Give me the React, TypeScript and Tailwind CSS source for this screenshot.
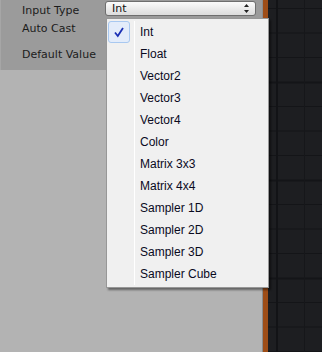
import React from "react";

const items = [
  "Int",
  "Float",
  "Vector2",
  "Vector3",
  "Vector4",
  "Color",
  "Matrix 3x3",
  "Matrix 4x4",
  "Sampler 1D",
  "Sampler 2D",
  "Sampler 3D",
  "Sampler Cube",
];

function GraphGrid() {
  return (
    <svg width="54" height="352" className="block">
      <rect width="54" height="352" fill="#1d1e21" />
      {[0, 1, 2, 3, 4, 5, 6, 7, 8, 9, 10, 11, 12, 13, 14].map((i) => (
        <rect key={"h" + i} x="0" y={8 + i * 24.5} width="54" height={i % 4 === 3 ? 2 : 1} fill="#141518" />
      ))}
      <rect x="8" y="0" width="2" height="352" fill="#121316" />
      <rect x="36" y="0" width="1" height="352" fill="#16171a" />
    </svg>
  );
}

export default function App() {
  return (
    <div className="relative flex h-[352px] w-[322px] overflow-hidden bg-[#b3b3b3] font-['DejaVu_Sans',sans-serif]">
      {/* Inspector */}
      <div className="flex w-[262px] flex-col">
        <div className="flex h-[70px] flex-col border-l border-[#a6a6a6] bg-[#9b9b9b] text-[11px] leading-[13px] text-[#1b1b1b]">
          <div className="flex h-[18px] items-start">
            <span className="ml-[21px] w-[83px] pt-[4px]">Input Type</span>
            <div className="relative mt-px flex h-[15px] w-[151px] items-center rounded-[3px] border border-[#6e6e6e] bg-[linear-gradient(#fbfbfb,#dcdcdc)] pl-[6px] text-[11px] text-[#111]">
              Int
              <svg width="5" height="9" viewBox="0 0 5 9" className="absolute right-[6px] top-[2px]">
                <path d="M2.5 0 L5 3 L0 3 Z M0 6 L5 6 L2.5 9 Z" fill="#222" />
              </svg>
            </div>
          </div>
          <span className="ml-[21px] mt-[4px]">Auto Cast</span>
          <span className="ml-[21px] mt-[13px]">Default Value</span>
        </div>
        <div className="flex-1 bg-[#b3b3b3]" />
      </div>
      <div className="w-px bg-[#8c8c8c]" />
      <div className="w-[5px] bg-[#9e4d17]" />
      <div className="flex-1">
        <GraphGrid />
      </div>

      {/* Dropdown menu */}
      <div className="absolute left-[106px] top-[18px] w-[163px] border border-[#979797] bg-[#f0f0f0] py-[2px] shadow-[2px_2px_2px_rgba(0,0,0,0.45)] font-['Liberation_Sans',sans-serif] text-[12px] text-[#0a0a1e]">
        <div className="absolute bottom-[2px] left-[27px] top-[2px] w-px bg-[#e2e3e3] border-r border-white" />
        {items.map((it, i) => (
          <div key={it} className="flex h-[22px] items-center">
            <div className="flex w-[33px] justify-start pl-px">
              {i === 0 && (
                <div className="flex h-[22px] w-[22px] items-center justify-center rounded-[3px] border border-[#a8c8f0] bg-[#e3ecfa]">
                  <svg width="10" height="11" viewBox="0 0 10 11">
                    <path d="M1 5.5 L3.8 9 L9 1" stroke="#1a2fb4" strokeWidth="1.8" fill="none" />
                  </svg>
                </div>
              )}
            </div>
            <span>{it}</span>
          </div>
        ))}
      </div>
    </div>
  );
}
